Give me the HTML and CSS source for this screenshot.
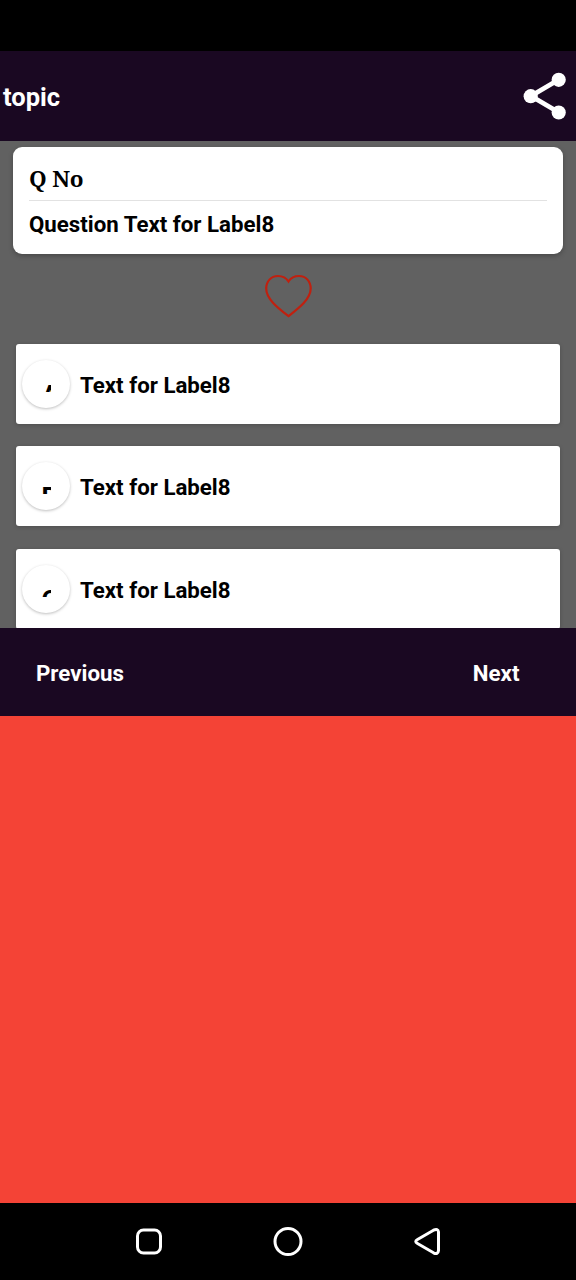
FILE: index.html
```html
<!DOCTYPE html>
<html lang="en">
<head>
<meta charset="utf-8">
<title>topic</title>
<link rel="stylesheet" href="styles.css">
</head>
<body>
<div class="screen">
  <div class="status-bar"></div>
  <header class="app-bar">
    <h1 class="title">topic</h1>
    <svg class="share" width="44" height="48" viewBox="0 0 44 48" fill="#fff"><path d="M36 7.500 8 24l28 16.500" fill="none" stroke="#fff" stroke-width="4.800"/><circle cx="35.700" cy="7.800" r="7.100"/><circle cx="7.700" cy="24.200" r="7.100"/><circle cx="35.700" cy="40.500" r="7.100"/></svg>
  </header>
  <main class="content">
    <section class="question">
      <div class="number"><span>Q No</span></div>
      <div class="question-text">Question Text for Label8</div>
    </section>
    <svg class="heart" width="50" height="46" viewBox="0 0 50 46"><path d="M25.500 8.500C23.300 5 19.500 3 15 3C8 3 3.200 8.500 3.200 15.500C3.200 26 15 35 25.500 43.200C36 35 47.700 26 47.700 15.500C47.700 8.500 43 3 36 3C31.500 3 27.800 5 25.500 8.500Z" fill="none" stroke="#c0200f" stroke-width="2.200"/></svg>
    <div class="options">
      <div class="option"><div class="badge"><span>A</span></div><span class="label">Text for Label8</span></div>
      <div class="option"><div class="badge"><span>B</span></div><span class="label">Text for Label8</span></div>
      <div class="option"><div class="badge"><span>C</span></div><span class="label">Text for Label8</span></div>
    </div>
  </main>
  <nav class="pager"><span>Previous</span><span>Next</span></nav>
  <div class="banner"></div>
  <footer class="system-nav">
    <svg width="30" height="30" viewBox="0 0 30 30"><rect x="3.500" y="3" width="23" height="23" rx="6"/></svg>
    <svg width="30" height="30" viewBox="0 0 30 30"><circle cx="15" cy="14.500" r="13"/></svg>
    <svg width="30" height="30" viewBox="0 0 30 30"><path d="M5.500 12.500 21.500 3.200Q26 1 26.500 5V23.500Q26 28 21.500 25.800L5.500 16.500Q2 14.500 5.500 12.500Z"/></svg>
  </footer>
</div>
</body>
</html>
```
FILE: styles.css
```css
body {
  margin: 0;
  font-family: Roboto, "Liberation Sans", sans-serif;
  font-weight: 700;
  color: #000;
}
.screen {
  width: 576px;
  height: 1280px;
  display: flex;
  flex-direction: column;
  overflow: hidden;
  background: #000;
}
.status-bar { flex: 0 0 51px; }
.app-bar {
  flex: 0 0 90px;
  box-sizing: border-box;
  display: flex;
  align-items: center;
  justify-content: space-between;
  padding: 0 9px 0 3px;
  background: #1a0822;
  color: #fff;
}
.title { margin: 2px 0 0; font-size: 25.500px; line-height: 30px; }
.content {
  flex: 0 0 487px;
  box-sizing: border-box;
  display: flex;
  flex-direction: column;
  align-items: center;
  padding-top: 6px;
  overflow: hidden;
  background: #616161;
}
.question {
  flex: none;
  width: 550px;
  height: 107px;
  box-sizing: border-box;
  padding: 0 16px;
  border-radius: 9px;
  background: #fff;
  box-shadow: 0 2px 5px rgba(0, 0, 0, .25);
}
.number {
  height: 53px;
  border-bottom: 1px solid #e2e2e2;
  font: 700 22.500px/64px "Noto Serif", "Liberation Serif", serif;
  letter-spacing: -.2px;
}
.question-text { font-size: 22.250px; line-height: 46px; }
.heart { flex: none; margin-top: 19px; }
.options {
  width: 544px;
  margin-top: 25px;
  display: flex;
  flex-direction: column;
  gap: 22.400px;
}
.option {
  flex: 0 0 80px;
  box-sizing: border-box;
  display: flex;
  align-items: center;
  padding-left: 6px;
  border-radius: 3px;
  background: #fff;
  box-shadow: 0 1px 4px rgba(0, 0, 0, .2);
}
.badge {
  width: 48px;
  height: 48px;
  box-sizing: border-box;
  padding: 21px 0 0 20px;
  border-radius: 50%;
  background: #fff;
  box-shadow: 0 1px 3px rgba(0, 0, 0, .26);
}
.badge span {
  display: block;
  width: 9px;
  height: 11px;
  overflow: hidden;
  font-size: 26px;
  line-height: 28px;
  text-indent: -.5px;
}
.label { margin: 2px 0 0 10px; font-size: 22.250px; }
.pager {
  flex: 0 0 88px;
  box-sizing: border-box;
  display: flex;
  align-items: center;
  justify-content: space-between;
  padding: 2px 56.500px 0 36px;
  background: #1a0822;
  color: #fff;
  font-size: 22.300px;
}
.banner { flex: 0 0 487px; background: #f44336; }
.system-nav {
  flex: 1;
  display: flex;
  justify-content: space-between;
  align-items: center;
  padding: 0 134px;
}
.system-nav svg { fill: none; stroke: #fff; stroke-width: 3; stroke-linejoin: round; }
```
